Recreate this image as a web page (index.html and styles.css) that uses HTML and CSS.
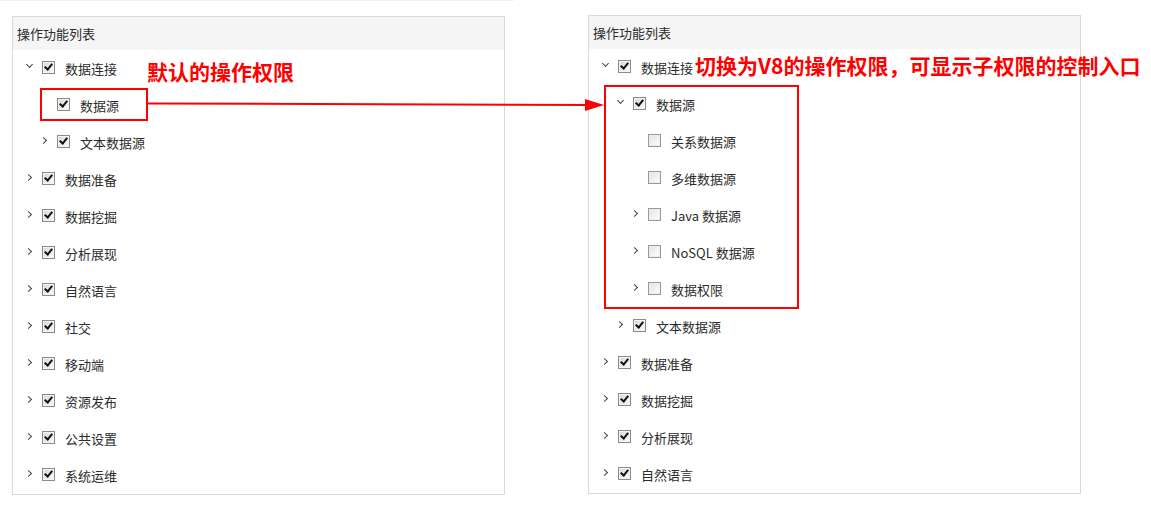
FILE: index.html
```html
<!DOCTYPE html>
<html lang="zh-CN">
<head>
  <meta charset="UTF-8">
  <title>操作功能列表</title>
  <link rel="stylesheet" href="styles.css">
</head>
<body>
  <div class="topline"></div>
  <div class="page">
    <div class="panel panel-left">
      <div class="panel-head">操作功能列表</div>
      <div class="tree">
        <div class="row lv0"><span class="tg down"></span><span class="cb on"></span><span class="label">数据连接</span></div>
        <div class="row lv1"><span class="tg"></span><span class="cb on"></span><span class="label">数据源</span></div>
        <div class="row lv1"><span class="tg right"></span><span class="cb on"></span><span class="label">文本数据源</span></div>
        <div class="row lv0"><span class="tg right"></span><span class="cb on"></span><span class="label">数据准备</span></div>
        <div class="row lv0"><span class="tg right"></span><span class="cb on"></span><span class="label">数据挖掘</span></div>
        <div class="row lv0"><span class="tg right"></span><span class="cb on"></span><span class="label">分析展现</span></div>
        <div class="row lv0"><span class="tg right"></span><span class="cb on"></span><span class="label">自然语言</span></div>
        <div class="row lv0"><span class="tg right"></span><span class="cb on"></span><span class="label">社交</span></div>
        <div class="row lv0"><span class="tg right"></span><span class="cb on"></span><span class="label">移动端</span></div>
        <div class="row lv0"><span class="tg right"></span><span class="cb on"></span><span class="label">资源发布</span></div>
        <div class="row lv0"><span class="tg right"></span><span class="cb on"></span><span class="label">公共设置</span></div>
        <div class="row lv0"><span class="tg right"></span><span class="cb on"></span><span class="label">系统运维</span></div>
      </div>
    </div>

    <div class="panel panel-right">
      <div class="panel-head">操作功能列表</div>
      <div class="tree">
        <div class="row lv0"><span class="tg down"></span><span class="cb on"></span><span class="label">数据连接</span></div>
        <div class="row lv1"><span class="tg down"></span><span class="cb on"></span><span class="label">数据源</span></div>
        <div class="row lv2"><span class="tg"></span><span class="cb"></span><span class="label">关系数据源</span></div>
        <div class="row lv2"><span class="tg"></span><span class="cb"></span><span class="label">多维数据源</span></div>
        <div class="row lv2"><span class="tg right"></span><span class="cb"></span><span class="label">Java 数据源</span></div>
        <div class="row lv2"><span class="tg right"></span><span class="cb"></span><span class="label">NoSQL 数据源</span></div>
        <div class="row lv2"><span class="tg right"></span><span class="cb"></span><span class="label">数据权限</span></div>
        <div class="row lv1"><span class="tg right"></span><span class="cb on"></span><span class="label">文本数据源</span></div>
        <div class="row lv0"><span class="tg right"></span><span class="cb on"></span><span class="label">数据准备</span></div>
        <div class="row lv0"><span class="tg right"></span><span class="cb on"></span><span class="label">数据挖掘</span></div>
        <div class="row lv0"><span class="tg right"></span><span class="cb on"></span><span class="label">分析展现</span></div>
        <div class="row lv0"><span class="tg right"></span><span class="cb on"></span><span class="label">自然语言</span></div>
      </div>
    </div>
  </div>

  <!-- annotations drawn over the screenshot -->
  <div class="note note-left">默认的操作权限</div>
  <div class="note note-right">切换为V8的操作权限，可显示子权限的控制入口</div>
  <div class="mark mark-left"></div>
  <div class="mark mark-right"></div>
  <svg class="arrow" width="1151" height="508" viewBox="0 0 1151 508">
    <line x1="148" y1="103.5" x2="588" y2="105" stroke="#ff0000" stroke-width="2"/>
    <polygon points="585,99 604,105 585,111" fill="#ff0000"/>
  </svg>
</body>
</html>
```

FILE: styles.css
```css
body {
  margin: 0;
  background: #fff;
  font-family: "Noto Sans CJK SC", "Noto Sans", sans-serif;
  font-size: 13px;
  color: #2b2b2b;
  position: relative;
  width: 1151px;
  height: 508px;
  overflow: hidden;
}
.topline {
  width: 514px;
  height: 1px;
  background: #f2f2f2;
}
.page {
  display: flex;
  align-items: flex-start;
  padding-top: 14px;
}
.panel {
  width: 491px;
  border: 1px solid #d9d9d9;
  background: #fff;
}
.panel-left {
  margin-left: 12px;
  margin-top: 1px;
}
.panel-right {
  margin-left: 83px;
}
.panel-head {
  height: 33px;
  line-height: 33px;
  padding-left: 4px;
  background: #f5f5f5;
  color: #2b2b2b;
}
.tree {
  display: flex;
  flex-direction: column;
}
.row {
  height: 37px;
  display: flex;
  align-items: center;
}
.lv0 { padding-left: 11px; }
.lv1 { padding-left: 26px; }
.lv2 { padding-left: 41px; }
.tg {
  width: 10px;
  height: 10px;
  margin-right: 8px;
  position: relative;
  top: -3px;
}
.tg.right::before,
.tg.down::before {
  content: "";
  position: absolute;
  width: 4px;
  height: 4px;
  border-right: 1px solid #444;
  border-bottom: 1px solid #444;
}
.tg.right::before {
  left: 2px;
  top: 3px;
  transform: rotate(-45deg);
}
.tg.down::before {
  left: 3px;
  top: 1px;
  transform: rotate(45deg);
}
.cb {
  width: 11px;
  height: 11px;
  border: 1px solid #8a8a8a;
  background: linear-gradient(135deg, #d8d8d8, #fafafa);
  box-shadow: inset 0 0 0 1px #f4f4f4;
  margin-right: 10px;
  position: relative;
  top: -1px;
}
.cb:not(.on) {
  border-color: #999;
  background: linear-gradient(135deg, #e2e2e2, #ffffff);
  box-shadow: inset 0 0 0 1px #eeeeee;
}
.cb.on::after {
  content: "";
  position: absolute;
  left: 3px;
  top: 0px;
  width: 3px;
  height: 6px;
  border-right: 2px solid #111;
  border-bottom: 2px solid #111;
  transform: rotate(40deg);
}
.label {
  white-space: nowrap;
}
.note {
  position: absolute;
  color: #ff0000;
  font-weight: bold;
  font-size: 21px;
  line-height: 24px;
  white-space: nowrap;
}
.note-left {
  left: 147px;
  top: 59px;
}
.note-right {
  left: 695px;
  top: 53px;
}
.mark {
  position: absolute;
  border: 2px solid #ff0000;
  box-sizing: border-box;
}
.mark-left {
  left: 40px;
  top: 88px;
  width: 108px;
  height: 33px;
}
.mark-right {
  left: 604px;
  top: 85px;
  width: 195px;
  height: 224px;
}
.arrow {
  position: absolute;
  left: 0;
  top: 0;
  pointer-events: none;
}
```
